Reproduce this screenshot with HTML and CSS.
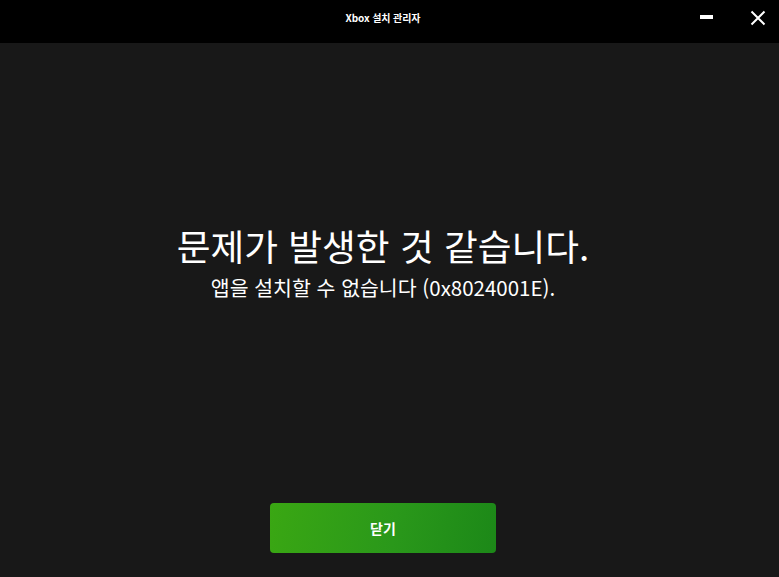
FILE: index.html
```html
<!DOCTYPE html>
<html lang="ko">
<head>
<meta charset="utf-8">
<title>Xbox 설치 관리자</title>
<link rel="stylesheet" href="styles.css">
</head>
<body>
<div class="window">
  <header class="titlebar">
    <div class="title">Xbox 설치 관리자</div>
    <div class="controls">
      <button class="ctl min" aria-label="최소화">
        <svg width="14" height="4" viewBox="0 0 14 4"><rect x="0" y="0" width="13" height="4" fill="#fff"/></svg>
      </button>
      <button class="ctl close" aria-label="닫기">
        <svg width="16" height="16" viewBox="0 0 16 16"><path d="M1.5 1.5 L14.5 14.5 M14.5 1.5 L1.5 14.5" stroke="#fff" stroke-width="2" fill="none"/></svg>
      </button>
    </div>
  </header>
  <main class="content">
    <div class="message">
      <h1 class="headline">문제가 발생한 것 같습니다.</h1>
      <p class="detail">앱을 설치할 수 없습니다 (0x8024001E).</p>
    </div>
    <div class="actions">
      <button class="primary">닫기</button>
    </div>
  </main>
</div>
</body>
</html>
```
FILE: styles.css
```css
html, body {
  margin: 0;
  padding: 0;
  height: 100%;
}
body {
  background: #181818;
  color: #fff;
  font-family: "Noto Sans CJK KR", "Noto Sans", sans-serif;
}
.window {
  display: flex;
  flex-direction: column;
  height: 577px;
  width: 779px;
}
.titlebar {
  height: 43px;
  background: #000;
  display: flex;
  align-items: center;
  justify-content: center;
  position: relative;
  padding-right: 13px;
  box-sizing: border-box;
}
.title {
  font-size: 10px;
  font-weight: 700;
  margin-top: -9px;
  letter-spacing: -0.1px;
}
.controls {
  position: absolute;
  right: 0;
  top: 0;
  display: flex;
  height: 36px;
}
.ctl {
  background: none;
  border: 0;
  padding: 0;
  display: flex;
  height: 36px;
  box-sizing: border-box;
}
.ctl.min {
  width: 14px;
  margin-right: 36px;
  padding-top: 15px;
}
.ctl.close {
  width: 16px;
  margin-right: 13px;
  padding-top: 10px;
}
.content {
  flex: 1;
  display: flex;
  flex-direction: column;
  align-items: center;
  padding-right: 13px;
}
.message {
  margin-top: 178px;
  text-align: center;
}
.headline {
  margin: 0;
  font-size: 36.7px;
  font-weight: 400;
  line-height: 48px;
}
.detail {
  margin: 4px 0 0;
  font-size: 20.5px;
  line-height: 28px;
}
.actions {
  margin-top: auto;
  margin-bottom: 24px;
}
.primary {
  width: 226px;
  height: 50px;
  border: 0;
  border-radius: 4px;
  background: linear-gradient(100deg, #3aa713 0%, #2a981a 55%, #1c8818 100%);
  color: #fff;
  font-family: "Noto Sans CJK KR", "Noto Sans", sans-serif;
  font-size: 14px;
  font-weight: 700;
}
```
